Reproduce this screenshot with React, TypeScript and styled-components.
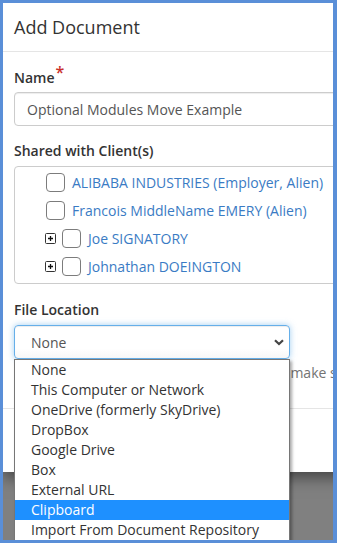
import React from "react";
import styled, { createGlobalStyle } from "styled-components";

const Global = createGlobalStyle`
  html, body { margin: 0; padding: 0; background: #ffffff; }
  body { font-family: "Open Sans", "Liberation Sans", sans-serif; }
  * { box-sizing: border-box; }
`;

const Frame = styled.div`
  width: 337px;
  height: 543px;
  border: 3px solid #5a8fd8;
  border-right-width: 4px;
  background: #808080;
  overflow: hidden;
  position: relative;
`;

const Modal = styled.div`
  width: 430px;
  height: 469px;
  background: #ffffff;
  box-shadow: 0 5px 15px rgba(0, 0, 0, 0.5);
  display: flex;
  flex-direction: column;
`;

const Header = styled.div`
  height: 49px;
  border-bottom: 1px solid #e5e5e5;
  padding: 0 11px;
  display: flex;
  align-items: center;
`;

const Title = styled.h4`
  margin: 0;
  font-size: 18px;
  font-weight: 400;
  color: #333333;
  line-height: 24px;
`;

const Body = styled.div`
  padding: 15px 11px 0 11px;
  position: relative;
`;

const Label = styled.div`
  font-size: 14px;
  font-weight: 600;
  color: #333333;
  line-height: 20px;
  height: 20px;
  margin-bottom: 5px;
`;

const Req = styled.span`
  color: #c9302c;
  font-size: 16px;
  font-weight: 600;
  position: relative;
  top: -5px;
  margin-left: 1px;
`;

const Group = styled.div<{ $mb: number }>`
  margin-bottom: ${(p) => p.$mb}px;
`;

const TextInput = styled.div`
  height: 34px;
  border: 1px solid #cccccc;
  border-radius: 4px;
  padding: 0 12px;
  display: flex;
  align-items: center;
  font-size: 14px;
  color: #555555;
  box-shadow: inset 0 1px 1px rgba(0, 0, 0, 0.075);
`;

const TreeBox = styled.div`
  height: 118px;
  border: 1px solid #cccccc;
  border-radius: 4px;
  padding-top: 1px;
`;

const TreeRow = styled.div<{ $indent: number }>`
  height: 28px;
  display: flex;
  align-items: center;
  padding-left: ${(p) => p.$indent}px;
`;

const Toggle = styled.span`
  width: 11px;
  height: 11px;
  margin-right: 6px;
  display: inline-flex;
`;

const Check = styled.span`
  width: 19px;
  height: 19px;
  border: 1px solid #7c7c7c;
  border-radius: 4px;
  background: #ffffff;
  margin-right: 7px;
  flex: none;
`;

const ClientLink = styled.a`
  color: #3a7bc4;
  font-size: 14px;
  text-decoration: none;
  white-space: nowrap;
`;

const SelectWrap = styled.div`
  position: relative;
  width: 276px;
`;

const Select = styled.div`
  height: 34px;
  border: 1px solid #66afe9;
  border-radius: 4px;
  padding: 0 5px 0 16px;
  display: flex;
  align-items: center;
  justify-content: space-between;
  font-size: 14px;
  color: #555555;
  background: linear-gradient(#ffffff 70%, #f7f7f7);
  box-shadow: inset 0 1px 1px rgba(0, 0, 0, 0.075), 0 0 6px rgba(102, 175, 233, 0.6);
`;

const Help = styled.div`
  margin-top: 4px;
  height: 20px;
  line-height: 20px;
  font-size: 14px;
  color: #737373;
  white-space: nowrap;
`;

const Options = styled.ul`
  position: absolute;
  left: 0;
  top: 34px;
  width: 276px;
  margin: 0;
  padding: 0;
  list-style: none;
  background: #ffffff;
  border: 1px solid #767676;
  box-shadow: 2px 2px 3px rgba(0, 0, 0, 0.35);
  z-index: 2;
`;

const Option = styled.li<{ $active?: boolean }>`
  height: 20px;
  line-height: 20px;
  padding-left: 16px;
  font-size: 14px;
  color: ${(p) => (p.$active ? "#ffffff" : "#333333")};
  background: ${(p) => (p.$active ? "#1e90ff" : "transparent")};
  white-space: nowrap;
`;

const Footer = styled.div`
  margin-top: 25px;
  border-top: 1px solid #e5e5e5;
  flex: 1;
`;

const PlusIcon = () => (
  <svg width="11" height="11" viewBox="0 0 11 11">
    <rect x="0.5" y="0.5" width="10" height="10" rx="1" fill="#fff" stroke="#333" />
    <path d="M3 5.5h5M5.5 3v5" stroke="#111" strokeWidth="1.3" />
  </svg>
);

const Chevron = () => (
  <svg width="10" height="7" viewBox="0 0 10 7">
    <path d="M1 1.2l4 3.8 4-3.8" fill="none" stroke="#444" strokeWidth="2.2" />
  </svg>
);

const clients = [
  { name: "ALIBABA INDUSTRIES (Employer, Alien)", expandable: false },
  { name: "Francois MiddleName EMERY (Alien)", expandable: false },
  { name: "Joe SIGNATORY", expandable: true },
  { name: "Johnathan DOEINGTON", expandable: true },
];

const options = [
  "None",
  "This Computer or Network",
  "OneDrive (formerly SkyDrive)",
  "DropBox",
  "Google Drive",
  "Box",
  "External URL",
  "Clipboard",
  "Import From Document Repository",
];

export default function App() {
  return (
    <>
      <Global />
      <Frame>
        <Modal>
          <Header>
            <Title>Add Document</Title>
          </Header>
          <Body>
            <Group $mb={15}>
              <Label>
                Name<Req>*</Req>
              </Label>
              <TextInput>Optional Modules Move Example</TextInput>
            </Group>
            <Group $mb={16}>
              <Label>Shared with Client(s)</Label>
              <TreeBox>
                {clients.map((c) => (
                  <TreeRow key={c.name} $indent={c.expandable ? 30 : 31}>
                    {c.expandable && (
                      <Toggle>
                        <PlusIcon />
                      </Toggle>
                    )}
                    <Check />
                    <ClientLink href="#">{c.name}</ClientLink>
                  </TreeRow>
                ))}
              </TreeBox>
            </Group>
            <Group $mb={0}>
              <Label>File Location</Label>
              <SelectWrap>
                <Select>
                  <span>None</span>
                  <Chevron />
                </Select>
                <Options>
                  {options.map((o) => (
                    <Option key={o} $active={o === "Clipboard"}>
                      {o}
                    </Option>
                  ))}
                </Options>
              </SelectWrap>
              <Help>Choose where the document file lives and make sure it is reachable.</Help>
            </Group>
          </Body>
          <Footer />
        </Modal>
      </Frame>
    </>
  );
}
